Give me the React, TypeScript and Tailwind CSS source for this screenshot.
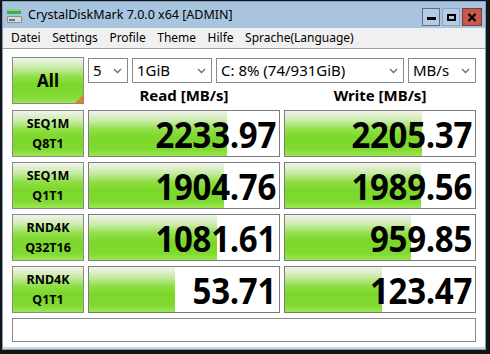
const rows = [
  { a: "SEQ1M", b: "Q8T1", read: "2233.97", write: "2205.37", rw: 72.6, ww: 72.1 },
  { a: "SEQ1M", b: "Q1T1", read: "1904.76", write: "1989.56", rw: 71, ww: 71.6 },
  { a: "RND4K", b: "Q32T16", read: "1081.61", write: "959.85", rw: 67.4, ww: 66.3 },
  { a: "RND4K", b: "Q1T1", read: "53.71", write: "123.47", rw: 45, ww: 51 },
];

const green =
  "bg-[linear-gradient(to_bottom,#f1f3ee_0%,#c9eba8_22%,#8fdf45_42%,#7bd72a_60%,#80da30_85%,#9be655_100%)]";

function Chevron() {
  return (
    <svg width="9" height="6" viewBox="0 0 9 6" fill="none">
      <path d="M1 1L4.5 4.5L8 1" stroke="#6b6b6b" strokeWidth="1.3" />
    </svg>
  );
}

function Select({ w, text }: { w: string; text: string }) {
  return (
    <div className={`${w} h-[25px] border border-[#8a8a8a] bg-white flex items-center justify-between pl-[4px] pr-[5px] text-[15px] text-black`}>
      <span className="leading-none">{text}</span>
      <Chevron />
    </div>
  );
}

function ValueBox({ value, pct }: { value: string; pct: number }) {
  return (
    <div className="relative w-[192px] h-[47px] border border-[#7d7d7d] bg-white">
      <div className={`absolute left-0 top-0 bottom-0 ${green}`} style={{ width: `${pct}%` }} />
      <div className="relative h-full flex items-center justify-end pr-[3px] pt-[3px]">
        <span className="font-['Open_Sans'] font-bold text-[33px] tracking-[-0.3px] leading-[40px] text-black scale-y-110">
          {value}
        </span>
      </div>
    </div>
  );
}

export default function App() {
  return (
    <div className="w-[490px] h-[354px] bg-[#151515] pt-px pl-[2px] font-['Noto_Sans',sans-serif] overflow-hidden">
      <div className="w-[484px] h-[349px] bg-[#a9c4df] border border-[#7c9cc0] flex flex-col">
        {/* title bar */}
        <div className="h-[26px] flex items-center shrink-0">
          <svg width="17" height="16" viewBox="0 0 17 16" className="ml-[3px] mr-[5px] mt-[2px]">
            <rect x="1" y="1" width="14" height="5" fill="#3cb04a" />
            <rect x="1" y="1" width="14" height="2" fill="#7fd67f" />
            <rect x="1" y="8" width="15" height="7" rx="1" fill="#8a8f96" />
            <rect x="2" y="9" width="13" height="5" fill="#d8dcdf" />
            <rect x="3" y="11" width="6" height="2" fill="#6b7178" />
          </svg>
          <span className="text-[12.5px] text-black mt-[1px]">CrystalDiskMark 7.0.0 x64 [ADMIN]</span>
          <div className="ml-auto mr-[3px] flex gap-[2px] mt-[4px]">
            <div className="w-[18px] h-[18px] border border-[#5f6f80] bg-[#b3cbe3] flex items-end justify-center pb-[5px]">
              <div className="w-[9px] h-[3px] bg-black" />
            </div>
            <div className="w-[18px] h-[18px] border border-[#8ea6bf] bg-[#b3cbe3] flex items-center justify-center">
              <div className="w-[9px] h-[7px] border-2 border-black" />
            </div>
            <div className="w-[20px] h-[18px] border border-[#7a3a36] bg-[#c9584b] flex items-center justify-center">
              <svg width="10" height="9" viewBox="0 0 10 9">
                <path d="M1.5 1L8.5 8M8.5 1L1.5 8" stroke="#000" strokeWidth="2.2" />
              </svg>
            </div>
          </div>
        </div>

        {/* menu bar */}
        <div className="h-[21px] shrink-0 bg-[#f0f0f0] border-b border-[#a0a0a0] flex items-center pl-[8px] gap-[11.5px] text-[12px] text-black">
          <span>Datei</span>
          <span>Settings</span>
          <span>Profile</span>
          <span>Theme</span>
          <span>Hilfe</span>
          <span>Sprache(Language)</span>
        </div>

        {/* content */}
        <div className="flex-1 bg-white pl-[9px] pt-[8px] flex flex-col gap-[5px]">
          <div className="flex gap-[4px]">
            <div className={`relative w-[72px] h-[47px] border border-[#8a8a8a] flex items-center justify-center ${green}`}>
              <span className="font-bold text-[17px] text-black">All</span>
              <div className="absolute right-0 bottom-0 w-0 h-0 border-l-[8px] border-l-transparent border-b-[8px] border-b-[#f07a1c]" />
            </div>
            <div className="flex flex-col">
              <div className="flex gap-[4px] mt-px">
                <Select w="w-[40px]" text="5" />
                <Select w="w-[80px]" text="1GiB" />
                <Select w="w-[188px]" text="C: 8% (74/931GiB)" />
                <Select w="w-[68px]" text="MB/s" />
              </div>
              <div className="flex gap-[4px] mt-[2px]">
                <div className="w-[192px] text-center font-bold text-[15px] text-black leading-[20px]">Read [MB/s]</div>
                <div className="w-[192px] text-center font-bold text-[15px] text-black leading-[20px]">Write [MB/s]</div>
              </div>
            </div>
          </div>

          {rows.map((r) => (
            <div key={r.a + r.b} className="flex gap-[4px]">
              <div className={`w-[72px] h-[47px] border border-[#8a8a8a] flex flex-col items-center justify-center ${green}`}>
                <span className="font-bold text-[12.5px] leading-[20px] text-black">{r.a}</span>
                <span className="font-bold text-[12.5px] leading-[20px] text-black">{r.b}</span>
              </div>
              <ValueBox value={r.read} pct={r.rw} />
              <ValueBox value={r.write} pct={r.ww} />
            </div>
          ))}

          <div className="w-[464px] h-[24px] border border-[#8a8a8a] bg-white" />
        </div>
        <div className="h-[2px] bg-[#d8d8d8] shrink-0" />
      </div>
    </div>
  );
}
